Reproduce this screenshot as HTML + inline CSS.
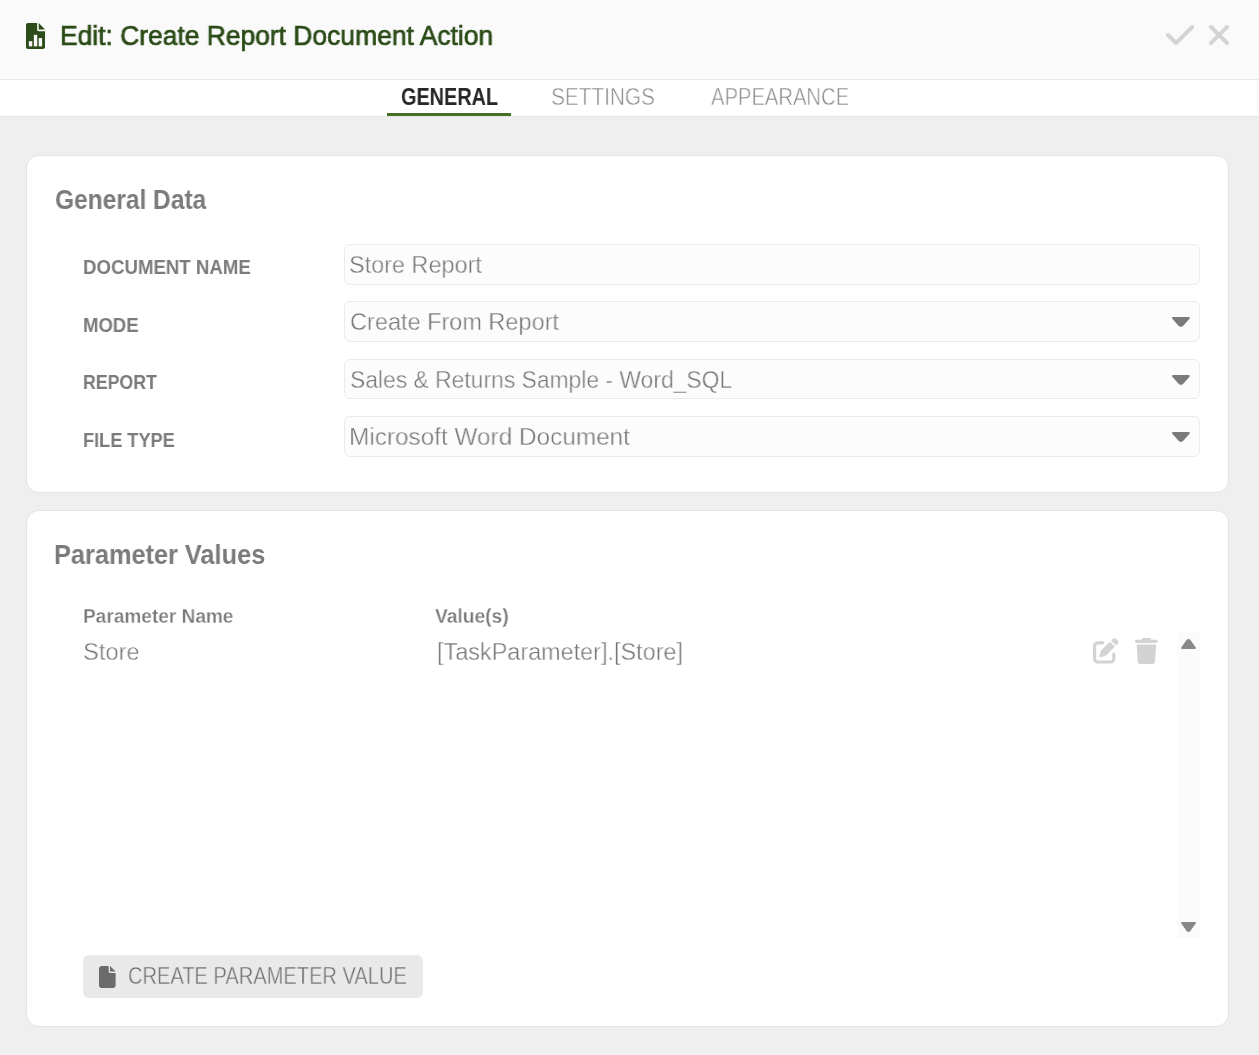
<!DOCTYPE html><html><head><meta charset="utf-8"><title>Edit: Create Report Document Action</title><style>
html,body{margin:0;padding:0;}
body{width:1259px;height:1055px;overflow:hidden;position:relative;background:#efefef;font-family:"Liberation Sans",sans-serif;}
.a{position:absolute;display:block;}
.t{position:absolute;white-space:nowrap;transform-origin:0 0;will-change:transform;}
.inp{position:absolute;left:344px;width:856px;box-sizing:border-box;background:#fcfcfc;border:1px solid #ebebeb;border-radius:6px;}
</style></head><body>
<div class="a" style="left:0;top:0;width:1259px;height:79px;background:#fafafa"></div>
<div class="a" style="left:0;top:79px;width:1259px;height:1px;background:#e8ebee"></div>
<div class="a" style="left:0;top:80px;width:1259px;height:36px;background:#ffffff"></div>
<div class="a" style="left:0;top:116px;width:1259px;height:1px;background:#e4e5e8"></div>
<div class="a" style="left:387px;top:113px;width:124px;height:3px;background:#467025"></div>
<svg class="a" style="left:26.1px;top:23px" width="19.1" height="26" viewBox="0 0 384 512" preserveAspectRatio="none"><path d="M0 40C0 17.9 17.9 0 40 0H224V128c0 17.7 14.3 32 32 32H384V472c0 22.1-17.9 40-40 40H40c-22.1 0-40-17.9-40-40V40zM384 128H256V0L384 128z" fill="#2c4c19"/><rect x="58" y="358" width="68" height="102" fill="#fafafa"/><rect x="158" y="233" width="68" height="227" fill="#fafafa"/><rect x="256" y="296" width="68" height="164" fill="#fafafa"/></svg>
<svg class="a" style="left:1166.2px;top:19px" width="28.2" height="32" viewBox="0 0 448 512" preserveAspectRatio="none"><path d="M438.6 105.4c12.5 12.5 12.5 32.8 0 45.3l-256 256c-12.5 12.5-32.8 12.5-45.3 0l-128-128c-12.5-12.5-12.5-32.8 0-45.3s32.8-12.5 45.3 0L160 338.7 393.4 105.4c12.5-12.5 32.8-12.5 45.3 0z" fill="#d4d4d4"/></svg>
<svg class="a" style="left:1207px;top:19px" width="24" height="32" viewBox="0 0 384 512" preserveAspectRatio="none"><path d="M342.6 150.6c12.5-12.5 12.5-32.8 0-45.3s-32.8-12.5-45.3 0L192 210.7 86.6 105.4c-12.5-12.5-32.8-12.5-45.3 0s-12.5 32.8 0 45.3L146.7 256 41.4 361.4c-12.5 12.5-12.5 32.8 0 45.3s32.8 12.5 45.3 0L192 301.3 297.4 406.6c12.5 12.5 32.8 12.5 45.3 0s12.5-32.8 0-45.3L237.3 256 342.6 150.6z" fill="#d4d4d4"/></svg>
<div class="a" style="left:26px;top:155px;width:1203px;height:338px;box-sizing:border-box;background:#fff;border:1px solid #e4e4e4;border-radius:13px"></div>
<div class="a" style="left:26px;top:510px;width:1203px;height:517px;box-sizing:border-box;background:#fff;border:1px solid #e4e4e4;border-radius:13px"></div>
<div class="inp" style="top:244px;height:41px"></div>
<div class="inp" style="top:301px;height:41px"></div>
<div class="inp" style="top:359px;height:40px"></div>
<div class="inp" style="top:416px;height:41px"></div>
<svg class="a" style="left:1170px;top:316px" width="22" height="13" viewBox="0 0 22 13" preserveAspectRatio="none"><path d="M3 2.1 H18.8 L12.3 9.2 Q10.9 10.4 9.5 9.2 Z" fill="#7b7b7b" stroke="#7b7b7b" stroke-width="2" stroke-linejoin="round"/></svg>
<svg class="a" style="left:1170px;top:373.5px" width="22" height="13" viewBox="0 0 22 13" preserveAspectRatio="none"><path d="M3 2.1 H18.8 L12.3 9.2 Q10.9 10.4 9.5 9.2 Z" fill="#7b7b7b" stroke="#7b7b7b" stroke-width="2" stroke-linejoin="round"/></svg>
<svg class="a" style="left:1170px;top:431px" width="22" height="13" viewBox="0 0 22 13" preserveAspectRatio="none"><path d="M3 2.1 H18.8 L12.3 9.2 Q10.9 10.4 9.5 9.2 Z" fill="#7b7b7b" stroke="#7b7b7b" stroke-width="2" stroke-linejoin="round"/></svg>
<svg class="a" style="left:1093px;top:638.2px" width="25.6" height="25.6" viewBox="0 0 512 512" preserveAspectRatio="none"><path d="M471.6 21.7c-21.9-21.9-57.3-21.9-79.2 0L362.3 51.7l97.9 97.9 30.1-30.1c21.9-21.9 21.9-57.3 0-79.2L471.6 21.7zm-299.2 220c-6.1 6.1-10.8 13.6-13.5 21.9l-29.6 88.8c-2.9 8.6-.6 18.1 5.8 24.6s15.9 8.7 24.6 5.8l88.8-29.6c8.2-2.7 15.7-7.4 21.9-13.5L437.7 172.3 339.7 74.3 172.4 241.7zM96 64C43 64 0 107 0 160V416c0 53 43 96 96 96H352c53 0 96-43 96-96V320c0-17.7-14.3-32-32-32s-32 14.3-32 32v96c0 17.7-14.3 32-32 32H96c-17.7 0-32-14.3-32-32V160c0-17.7 14.3-32 32-32h96c17.7 0 32-14.3 32-32s-14.3-32-32-32H96z" fill="#d3d3d3"/></svg>
<svg class="a" style="left:1135.2px;top:638px" width="22.75" height="26" viewBox="0 0 448 512" preserveAspectRatio="none"><path d="M135.2 17.7L128 32H32C14.3 32 0 46.3 0 64S14.3 96 32 96H416c17.7 0 32-14.3 32-32s-14.3-32-32-32H320l-7.2-14.3C307.4 6.8 296.3 0 284.2 0H163.8c-12.1 0-23.2 6.8-28.6 17.7zM416 128H32L53.2 467c1.6 25.3 22.6 45 47.9 45H346.9c25.3 0 46.3-19.7 47.9-45L416 128z" fill="#d3d3d3"/></svg>
<div class="a" style="left:1177px;top:632px;width:23px;height:306px;background:#fbfbfb"></div>
<svg class="a" style="left:1180px;top:637px" width="17" height="14" viewBox="0 0 17 14" preserveAspectRatio="none"><path d="M2.1 11 H14.9 L9.7 3.6 Q8.5 2.2 7.3 3.6 Z" fill="#888888" stroke="#888888" stroke-width="2" stroke-linejoin="round"/></svg>
<svg class="a" style="left:1180px;top:921px" width="17" height="14" viewBox="0 0 17 14" preserveAspectRatio="none"><path d="M2.1 1.9 H14.9 L9.7 9.3 Q8.5 10.7 7.3 9.3 Z" fill="#888888" stroke="#888888" stroke-width="2" stroke-linejoin="round"/></svg>
<div class="a" style="left:83px;top:955px;width:340px;height:43px;background:#e9e9e9;border-radius:6px"></div>
<svg class="a" style="left:99.4px;top:965.9px" width="16.6" height="22.1" viewBox="0 0 384 512" preserveAspectRatio="none"><path d="M0 64C0 28.7 28.7 0 64 0H224V128c0 17.7 14.3 32 32 32H384V448c0 35.3-28.7 64-64 64H64c-35.3 0-64-28.7-64-64V64zm384 64H256V0L384 128z" fill="#6b6b6b"/></svg>
<div class="t" style="left:60.14px;top:21px;font-size:27.0px;line-height:30px;font-weight:400;color:#2a4a16;transform:scaleX(0.9782);-webkit-text-stroke:0.7px #2a4a16;">Edit: Create Report Document Action</div>
<div class="t" style="left:400.64px;top:84px;font-size:23.1px;line-height:26px;font-weight:700;color:#262626;transform:scaleX(0.8604);">GENERAL</div>
<div class="t" style="left:550.50px;top:84px;font-size:23.1px;line-height:26px;font-weight:400;color:#8a8a8a;transform:scaleX(0.9000);-webkit-text-stroke:0.5px #fff;">SETTINGS</div>
<div class="t" style="left:711.42px;top:84px;font-size:23.1px;line-height:26px;font-weight:400;color:#8a8a8a;transform:scaleX(0.8750);-webkit-text-stroke:0.5px #fff;">APPEARANCE</div>
<div class="t" style="left:54.81px;top:184px;font-size:27.4px;line-height:31px;font-weight:700;color:#7b7b7b;transform:scaleX(0.8946);">General Data</div>
<div class="t" style="left:83.07px;top:256px;font-size:20.1px;line-height:22px;font-weight:700;color:#7b7b7b;transform:scaleX(0.9274);">DOCUMENT NAME</div>
<div class="t" style="left:82.88px;top:314px;font-size:20.1px;line-height:22px;font-weight:700;color:#7b7b7b;transform:scaleX(0.9220);">MODE</div>
<div class="t" style="left:82.92px;top:371px;font-size:20.1px;line-height:22px;font-weight:700;color:#7b7b7b;transform:scaleX(0.8819);">REPORT</div>
<div class="t" style="left:82.90px;top:429px;font-size:20.1px;line-height:22px;font-weight:700;color:#7b7b7b;transform:scaleX(0.9030);">FILE TYPE</div>
<div class="t" style="left:349.25px;top:251px;font-size:24.6px;line-height:27px;font-weight:400;color:#767676;transform:scaleX(0.9529);-webkit-text-stroke:0.4px #fcfcfc;">Store Report</div>
<div class="t" style="left:349.84px;top:308px;font-size:24.6px;line-height:27px;font-weight:400;color:#767676;transform:scaleX(0.9558);-webkit-text-stroke:0.4px #fcfcfc;">Create From Report</div>
<div class="t" style="left:349.57px;top:366px;font-size:24.6px;line-height:27px;font-weight:400;color:#767676;transform:scaleX(0.9298);-webkit-text-stroke:0.4px #fcfcfc;">Sales &amp; Returns Sample - Word_SQL</div>
<div class="t" style="left:349.42px;top:423px;font-size:24.6px;line-height:27px;font-weight:400;color:#767676;transform:scaleX(0.9897);-webkit-text-stroke:0.4px #fcfcfc;">Microsoft Word Document</div>
<div class="t" style="left:54.45px;top:539px;font-size:27.4px;line-height:31px;font-weight:700;color:#7b7b7b;transform:scaleX(0.9248);">Parameter Values</div>
<div class="t" style="left:83.07px;top:605px;font-size:20.4px;line-height:22px;font-weight:700;color:#777777;transform:scaleX(0.9346);-webkit-text-stroke:0.3px #fff;">Parameter Name</div>
<div class="t" style="left:435.46px;top:605px;font-size:20.4px;line-height:22px;font-weight:700;color:#777777;transform:scaleX(0.9408);-webkit-text-stroke:0.3px #fff;">Value(s)</div>
<div class="t" style="left:83.04px;top:638px;font-size:24.6px;line-height:27px;font-weight:400;color:#767676;transform:scaleX(0.9643);-webkit-text-stroke:0.4px #fff;">Store</div>
<div class="t" style="left:437.30px;top:638px;font-size:24.6px;line-height:27px;font-weight:400;color:#767676;transform:scaleX(0.9522);-webkit-text-stroke:0.4px #fff;">[TaskParameter].[Store]</div>
<div class="t" style="left:127.53px;top:963px;font-size:23.2px;line-height:26px;font-weight:400;color:#6e6e6e;transform:scaleX(0.8656);-webkit-text-stroke:0.4px #e9e9e9;">CREATE PARAMETER VALUE</div>
</body></html>
